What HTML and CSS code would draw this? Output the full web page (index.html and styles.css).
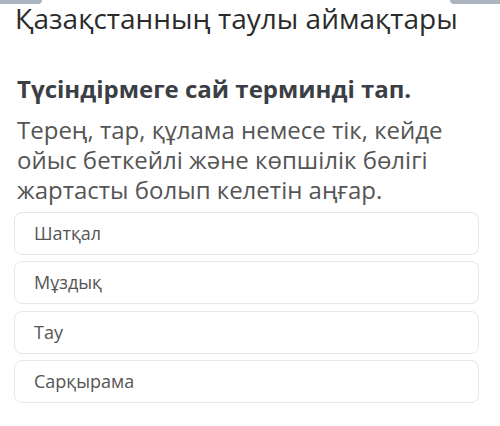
FILE: index.html
```html
<!DOCTYPE html>
<html>
<head>
  <meta charset="UTF-8">
  <title>Қазақстанның таулы аймақтары</title>
  <link rel="stylesheet" href="styles.css">
</head>
<body>
  <div class="tab tab-left"></div>
  <div class="tab tab-right"></div>
  <h1 class="title">Қазақстанның таулы аймақтары</h1>
  <div class="question">
    <h2 class="prompt">Түсіндірмеге сай терминді тап.</h2>
    <p class="text">Терең, тар, құлама немесе тік, кейде ойыс беткейлі және көпшілік бөлігі жартасты болып келетін аңғар.</p>
  </div>
  <div class="options">
    <div class="option">Шатқал</div>
    <div class="option">Мұздық</div>
    <div class="option">Тау</div>
    <div class="option">Сарқырама</div>
  </div>
</body>
</html>
```

FILE: styles.css
```css
body{
  margin:0;
  padding:0 21px 0 14px;
  background-color:#fff;
  font-family:"Open Sans", "Noto Sans", sans-serif;
  color:#555;
}
.tab{
  position:absolute;
  top:0;
  height:4px;
  background-color:#aab5c0;
}
.tab-left{
  left:0;
  width:42px;
  border-bottom-right-radius:6px;
}
.tab-right{
  right:0;
  width:50px;
  border-bottom-left-radius:6px;
}
.title{
  margin:0;
  padding:0 0 0 1px;
  font-size:28px;
  font-weight:normal;
  line-height:36px;
  color:#2b2b2b;
  white-space:nowrap;
}
.question{
  padding:38px 0 0 3px;
}
.prompt{
  margin:0;
  font-size:24px;
  font-weight:bold;
  line-height:30px;
  color:#3b3f45;
}
.text{
  margin:11px 0 0;
  font-size:24px;
  line-height:30px;
}
.options{
  display:flex;
  flex-direction:column;
  gap:6.4px;
  margin-top:7px;
}
.option{
  height:41px;
  line-height:41px;
  padding-left:19px;
  border:1px solid #e6e6e6;
  border-radius:8px;
  font-size:18px;
}
```
